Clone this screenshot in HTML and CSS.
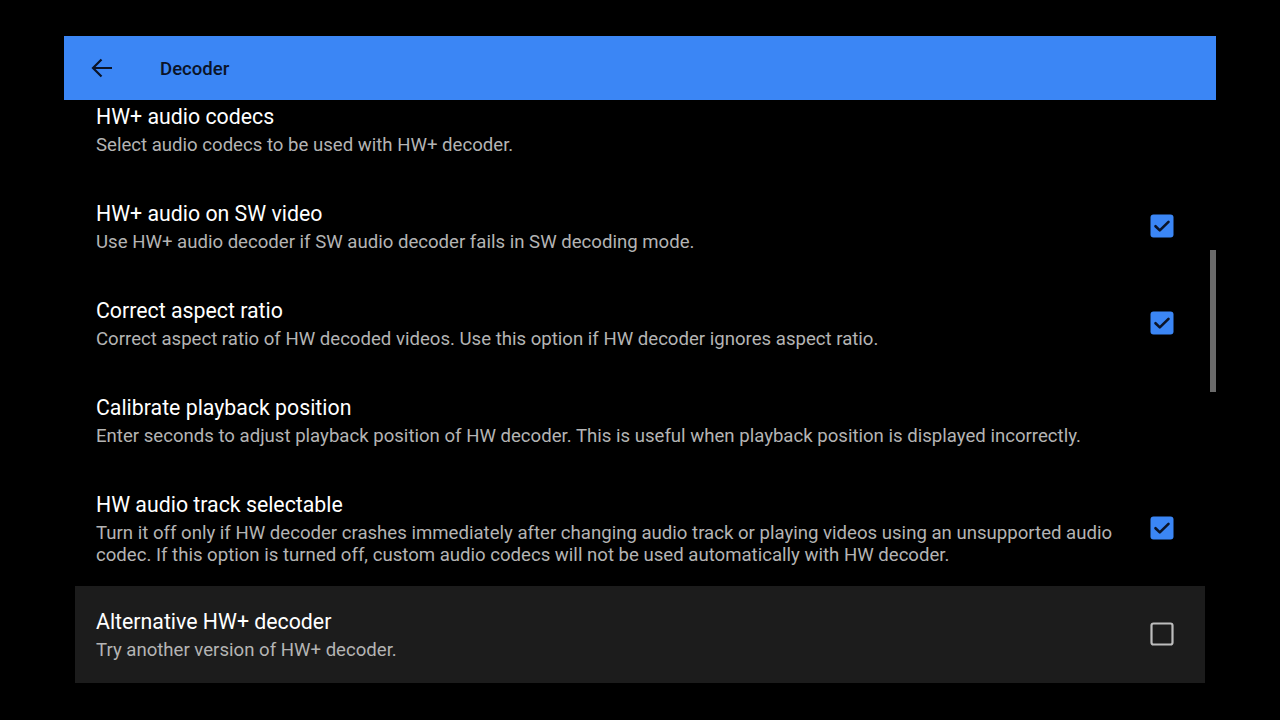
FILE: index.html
```html
<!DOCTYPE html>
<html lang="en">
<head>
  <meta charset="UTF-8" />
  <title>Decoder</title>
  <link rel="stylesheet" href="styles.css">
</head>
<body>
  <div class="app">
    <header class="toolbar">
      <svg class="back" viewBox="0 0 22 22" width="22" height="22"><path d="M21 11H2M10.5 2.5L2 11l8.5 8.5"/></svg>
      <h1>Decoder</h1>
    </header>
    <main class="list">
      <div class="list-inner">
        <div class="pref">
          <div class="pref-text">
            <div class="pref-title">HW+ audio codecs</div>
            <div class="pref-sub">Select audio codecs to be used with HW+ decoder.</div>
          </div>
        </div>
        <div class="pref">
          <div class="pref-text">
            <div class="pref-title">HW+ audio on SW video</div>
            <div class="pref-sub">Use HW+ audio decoder if SW audio decoder fails in SW decoding mode.</div>
          </div>
          <span class="check on"><svg viewBox="0 0 24 24" width="24" height="24"><rect x="0.5" y="0.5" width="23" height="23" rx="3"/><path d="M5.5 12.2l4.3 4.2 8.7-8.6"/></svg></span>
        </div>
        <div class="pref">
          <div class="pref-text">
            <div class="pref-title">Correct aspect ratio</div>
            <div class="pref-sub">Correct aspect ratio of HW decoded videos. Use this option if HW decoder ignores aspect ratio.</div>
          </div>
          <span class="check on"><svg viewBox="0 0 24 24" width="24" height="24"><rect x="0.5" y="0.5" width="23" height="23" rx="3"/><path d="M5.5 12.2l4.3 4.2 8.7-8.6"/></svg></span>
        </div>
        <div class="pref">
          <div class="pref-text">
            <div class="pref-title">Calibrate playback position</div>
            <div class="pref-sub">Enter seconds to adjust playback position of HW decoder. This is useful when playback position is displayed incorrectly.</div>
          </div>
        </div>
        <div class="pref">
          <div class="pref-text">
            <div class="pref-title">HW audio track selectable</div>
            <div class="pref-sub">Turn it off only if HW decoder crashes immediately after changing audio track or playing videos using an unsupported audio codec. If this option is turned off, custom audio codecs will not be used automatically with HW decoder.</div>
          </div>
          <span class="check on"><svg viewBox="0 0 24 24" width="24" height="24"><rect x="0.5" y="0.5" width="23" height="23" rx="3"/><path d="M5.5 12.2l4.3 4.2 8.7-8.6"/></svg></span>
        </div>
        <div class="pref focused">
          <div class="pref-text">
            <div class="pref-title">Alternative HW+ decoder</div>
            <div class="pref-sub">Try another version of HW+ decoder.</div>
          </div>
          <span class="check off"><svg viewBox="0 0 24 24" width="24" height="24"><rect x="1.5" y="1.5" width="21" height="21" rx="2"/></svg></span>
        </div>
      </div>
    </main>
    <div class="scrollbar"></div>
  </div>
</body>
</html>
```

FILE: styles.css
```css
*,*::before,*::after{box-sizing:border-box;margin:0;padding:0;}
body{
  background:#000;
  font-family: Roboto, 'Noto Sans', sans-serif;
  color:#fff;
  overflow:hidden;
}
.app{
  position:relative;
  width:1152px;
  height:684px;
  margin:36px 0 0 64px;
  display:flex;flex-direction:column;
}
.toolbar{
  background:#3b86f5;
  height:64px;
  display:flex;align-items:center;
  padding-left:27px;
  gap:47px;
  flex-shrink:0;
}
.toolbar .back{fill:none;stroke:#0b1428;stroke-width:2.2;}
.toolbar h1{
  font-size:18.6px;
  font-weight:500;
  color:#0b1428;
  margin-top:2px;
}
.list{
  flex:1;
  overflow:hidden;
  padding:0 11px;
}
.list-inner{margin-top:-19px;}
.pref{
  display:flex;align-items:center;
  padding:23px 31px 22px 21px;
  gap:30px;
}
.pref-text{flex:1;}
.pref-title{
  font-size:21.3px;
  line-height:26px;
  color:#fff;
}
.pref-sub{
  font-size:18.6px;
  line-height:22px;
  margin-top:4px;
  color:#b4b4b4;
}
.focused{
  background:#1c1c1c;
  margin-top:-2px;
}
.check{display:flex;margin-top:-2px;}
.check.on rect{fill:#3b86f5;}
.check.on path{fill:none;stroke:#0b1428;stroke-width:2.6;stroke-linecap:round;stroke-linejoin:round;}
.check.off rect{fill:none;stroke:#bdbdbd;stroke-width:2.2;}
.scrollbar{
  position:absolute;
  right:0;top:214px;
  width:6px;height:142px;
  background:#6a6a6a;
}
```
